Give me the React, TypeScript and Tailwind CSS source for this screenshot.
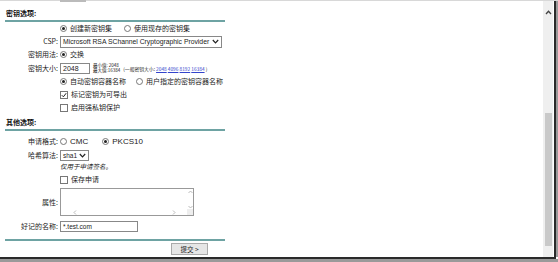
import React from "react";

const F = { fontFamily: '"Noto Sans CJK SC", "Liberation Sans", sans-serif' };
const L = { fontFamily: '"Liberation Sans", "Noto Sans CJK SC", sans-serif' };

function Radio({ on }: { on?: boolean }) {
  return (
    <span className="inline-flex items-center justify-center w-[7px] h-[7px] rounded-full border border-[#777] bg-white mr-[3px] shrink-0">
      {on && <span className="w-[3px] h-[3px] rounded-full bg-[#222]" />}
    </span>
  );
}

function Check({ on }: { on?: boolean }) {
  return (
    <span className="inline-flex items-center justify-center w-[8px] h-[8px] border border-[#777] bg-white mr-[3px] shrink-0">
      {on && (
        <svg width="6" height="6" viewBox="0 0 6 6">
          <path d="M0.8 3.2 L2.4 4.8 L5.2 1.2" stroke="#222" strokeWidth="1" fill="none" />
        </svg>
      )}
    </span>
  );
}

function Row({ label, children, className = "" }: { label?: string; children: React.ReactNode; className?: string }) {
  return (
    <div className={`flex items-center whitespace-nowrap ${className}`}>
      <div className="w-[54px] shrink-0 text-right pr-[1px] text-[7px] leading-[9px] text-[#222]">{label}</div>
      <div className="flex items-center pl-[1px] text-[7px] leading-[9px] text-[#222]">{children}</div>
    </div>
  );
}

function Chevron() {
  return (
    <svg width="7" height="5" viewBox="0 0 7 5">
      <path d="M0.8 1 L3.5 3.8 L6.2 1" stroke="#222" strokeWidth="1.2" fill="none" />
    </svg>
  );
}

export default function App() {
  return (
    <div className="relative w-[558px] h-[262px] bg-white overflow-hidden whitespace-nowrap" style={F}>
      <div className="flex h-[257px] border-t border-[#d8d8d8]">
        <div className="flex-1 relative">
          <div className="absolute left-[60px] top-[-1px] w-[26px] h-[2px] bg-[#bbb]" />
          <div className="pl-[5px] pt-[8px] w-[225px]">
            <div className="text-[7px] leading-[9px] font-bold text-[#111] pl-[1px]">密钥选项:</div>
            <div className="h-[2px] bg-[#6ea3a3] mt-[2px]" />
            <div className="flex flex-col">
              <Row className="h-[13px]">
                <Radio on />
                <span>创建新密钥集</span>
                <span className="w-[12px]" />
                <Radio />
                <span>使用现存的密钥集</span>
              </Row>
              <Row label="CSP:" className="h-[13px]">
                <div className="flex items-center justify-between w-[162px] h-[12px] border border-[#888] pl-[2px] pr-[2px] text-[6.8px]" style={L}>
                  <span>Microsoft RSA SChannel Cryptographic Provider</span>
                  <Chevron />
                </div>
              </Row>
              <Row label="密钥用法:" className="h-[13px]">
                <Radio on />
                <span>交换</span>
              </Row>
              <Row label="密钥大小:" className="h-[14px]">
                <div className="w-[30px] h-[11px] border border-[#888] px-[2px] text-[7px] leading-[9px]" style={L}>2048</div>
                <div className="flex flex-col ml-[3px] text-[4.5px] leading-[5px]">
                  <span>最小值: 2048</span>
                  <span>最大值:16384</span>
                </div>
                <span className="ml-[3px] text-[4.8px]">
                  (一般密钥大小: <span className="text-[#3344cc] underline">2048</span>{" "}
                  <span className="text-[#3344cc] underline">4096</span>{" "}
                  <span className="text-[#3344cc] underline">8192</span>{" "}
                  <span className="text-[#3344cc] underline">16384</span> )
                </span>
              </Row>
              <Row className="h-[13px]">
                <Radio on />
                <span>自动密钥容器名称</span>
                <span className="w-[10px]" />
                <Radio />
                <span>用户指定的密钥容器名称</span>
              </Row>
              <Row className="h-[13px]">
                <Check on />
                <span>标记密钥为可导出</span>
              </Row>
              <Row className="h-[13px]">
                <Check />
                <span>启用强私钥保护</span>
              </Row>
            </div>
            <div className="text-[7px] leading-[9px] font-bold text-[#111] mt-[4px] pl-[1px]">其他选项:</div>
            <div className="h-[2px] bg-[#6ea3a3] mt-[2px]" />
            <div className="mt-[3px] flex flex-col">
              <Row label="申请格式:" className="h-[14px]">
                <Radio />
                <span className="text-[8px]" style={L}>CMC</span>
                <span className="w-[14px]" />
                <Radio on />
                <span className="text-[8px]" style={L}>PKCS10</span>
              </Row>
              <Row label="哈希算法:" className="h-[14px]">
                <div className="flex items-center justify-between w-[29px] h-[11px] border border-[#888] px-[2px] text-[6.5px]" style={L}>
                  <span>sha1</span>
                  <Chevron />
                </div>
              </Row>
              <Row className="h-[9px]">
                <span className="italic text-[6.5px]">仅用于申请签名。</span>
              </Row>
              <Row className="h-[13px] mt-[2px]">
                <Check />
                <span>保存申请</span>
              </Row>
              <Row label="属性:" className="h-[30px] mt-[1px]">
                <div className="relative w-[134px] h-[28px] border border-[#999] bg-white">
                  <div className="absolute right-0 top-0 w-[6px] h-[21px] flex flex-col items-center justify-between py-[1px]">
                    <svg width="5" height="4" viewBox="0 0 5 4"><path d="M0.5 3 L2.5 1 L4.5 3" stroke="#aaa" strokeWidth="0.8" fill="none" /></svg>
                    <svg width="5" height="4" viewBox="0 0 5 4"><path d="M0.5 1 L2.5 3 L4.5 1" stroke="#aaa" strokeWidth="0.8" fill="none" /></svg>
                  </div>
                  <div className="absolute left-0 bottom-0 h-[6px] w-[127px] flex items-center justify-between px-[12px]">
                    <svg width="4" height="5" viewBox="0 0 4 5"><path d="M3 0.5 L1 2.5 L3 4.5" stroke="#aaa" strokeWidth="0.8" fill="none" /></svg>
                    <svg width="4" height="5" viewBox="0 0 4 5"><path d="M1 0.5 L3 2.5 L1 4.5" stroke="#aaa" strokeWidth="0.8" fill="none" /></svg>
                  </div>
                  <div className="absolute right-0 bottom-0 w-[6px] h-[6px] bg-[#eee]" />
                </div>
              </Row>
              <Row label="好记的名称:" className="h-[13px] mt-[3px]">
                <div className="w-[78px] h-[11px] border border-[#888] px-[2px] text-[6.5px] leading-[9px]" style={L}>*.test.com</div>
              </Row>
            </div>
            <div className="h-[2px] bg-[#6ea3a3] mt-[6px]" />
            <div className="flex justify-end pr-[17px] mt-[2px]">
              <div className="w-[37px] h-[12px] border border-[#aaa] bg-[#e6e6e6] text-[6.5px] leading-[10px] text-center text-[#222]">提交 &gt;</div>
            </div>
          </div>
        </div>
        <div className="w-[10px] bg-[#efefef] flex flex-col items-center">
          <svg className="mt-[9px]" width="7" height="5" viewBox="0 0 7 5"><path d="M1 4 L3.5 1.3 L6 4" stroke="#444" strokeWidth="1.3" fill="none" /></svg>
          <div className="w-[7px] bg-[#c9c9c9] mt-[98px] h-[133px]" />
        </div>
        <div className="w-[1px] bg-white" />
        <div className="w-[2px] bg-[#2a2a2a]" />
        <div className="w-[2px] bg-[#9a9a9a]" />
      </div>
      <div className="h-[2px] bg-[#2a2a2a] mr-[2px]" />
      <div className="h-[3px] bg-[#9a9a9a]" />
    </div>
  );
}
